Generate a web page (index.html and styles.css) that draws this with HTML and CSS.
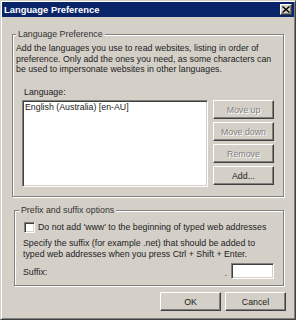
FILE: index.html
```html
<!DOCTYPE html>
<html>
<head>
<meta charset="utf-8">
<title>Language Preference</title>
<link rel="stylesheet" href="styles.css">
</head>
<body>
<div class="window">
  <div class="titlebar">
    <span class="title">Language Preference</span>
    <span class="close"><svg width="8" height="7" viewBox="0 0 8 7"><path d="M0.5 0.5 L7.5 6.5 M7.5 0.5 L0.5 6.5" stroke="#000" stroke-width="1.4" fill="none"/></svg></span>
  </div>
  <div class="content">
    <fieldset class="group group-lang">
      <legend>Language Preference</legend>
      <p class="desc">Add the languages you use to read websites, listing in order of<br>preference. Only add the ones you need, as some characters can<br>be used to impersonate websites in other languages.</p>
      <div class="lang-area">
        <div class="label">Language:</div>
        <div class="lang-row">
          <div class="listbox"><div class="item">English (Australia) [en-AU]</div></div>
          <div class="side-buttons">
            <button class="btn" disabled>Move up</button>
            <button class="btn" disabled>Move down</button>
            <button class="btn" disabled>Remove</button>
            <button class="btn">Add...</button>
          </div>
        </div>
      </div>
    </fieldset>
    <fieldset class="group group-prefix">
      <legend>Prefix and suffix options</legend>
      <div class="check-row">
        <span class="checkbox"></span>
        <span class="check-label">Do not add 'www' to the beginning of typed web addresses</span>
      </div>
      <p class="specify">Specify the suffix (for example .net) that should be added to<br>typed web addresses when you press Ctrl + Shift + Enter.</p>
      <div class="suffix-row">
        <span class="suffix-label">Suffix:</span>
        <span class="suffix-field"><span class="dot">.</span><span class="textbox"></span></span>
      </div>
    </fieldset>
    <div class="dialog-buttons">
      <button class="btn">OK</button>
      <button class="btn">Cancel</button>
    </div>
  </div>
</div>
</body>
</html>
```
FILE: styles.css
```css
* { box-sizing: border-box; }
html, body { margin: 0; padding: 0; background: #d4d0c8; }
body {
  font-family: "Liberation Sans", Arial, sans-serif;
  font-size: 8.8px;
  color: #222;
  width: 296px;
  height: 320px;
  overflow: hidden;
}
.window {
  width: 296px;
  height: 320px;
  background: #d4d0c8;
  border: 1px solid;
  border-color: #d4d0c8 #404040 #404040 #d4d0c8;
  box-shadow: inset 1px 1px #fff, inset -1px -1px #808080;
  padding: 1px;
  display: flex;
  flex-direction: column;
}
.titlebar {
  height: 15px;
  flex: none;
  background: #0a246a;
  color: #fff;
  display: flex;
  align-items: center;
  justify-content: space-between;
  padding: 0 2px 0 2px;
}
.title { font-weight: bold; font-size: 9.4px; line-height: 11px; }
.close {
  width: 12px;
  height: 11px;
  background: #d4d0c8;
  border: 1px solid;
  border-color: #fff #404040 #404040 #fff;
  box-shadow: inset -1px -1px #808080;
  display: flex;
  align-items: center;
  justify-content: center;
}
.close svg { display: block; }
.content {
  flex: 1;
  display: flex;
  flex-direction: column;
  padding: 0 8px 0 10px;
}
.group {
  margin: 0 2px 0 0;
  min-inline-size: 0;
  border: 1px solid #808080;
  box-shadow: inset 1px 1px #fff, 1px 1px #fff;
}
.group legend {
  padding: 0 2px;
  margin: 0;
  line-height: 11px;
  background: #d4d0c8;
  color: #333;
}
.group-lang {
  margin-top: 12px;
  padding: 3px 8px 9px 3px;
}
.desc {
  margin: 0;
  line-height: 10.5px;
  white-space: nowrap;
}
.lang-area { padding-left: 6px; }
.label {
  margin: 12px 0 0 2px;
  line-height: 10.5px;
}
.lang-row {
  margin-top: 3px;
  display: flex;
  align-items: flex-start;
}
.listbox {
  width: 186px;
  height: 87px;
  background: #fff;
  border: 1px solid;
  border-color: #808080 #fff #fff #808080;
  box-shadow: inset 1px 1px #404040, inset -1px -1px #d4d0c8;
  padding: 1px 2px;
}
.item { line-height: 10.5px; white-space: nowrap; }
.side-buttons {
  margin-left: 5px;
  display: flex;
  flex-direction: column;
  gap: 3px;
}
.btn {
  width: 61px;
  height: 19px;
  padding: 0;
  margin: 0;
  font: inherit;
  color: #222;
  background: #d4d0c8;
  border: 1px solid;
  border-color: #fff #404040 #404040 #fff;
  box-shadow: inset -1px -1px #808080;
  border-radius: 0;
  text-align: center;
  line-height: 10px;
}
.btn:disabled {
  color: #808080;
  text-shadow: 1px 1px #fff;
}
.group-prefix {
  margin-top: 8px;
  margin-left: 2px;
  padding: 6px 9px 6px 4px;
}
.check-row {
  display: flex;
  align-items: center;
  height: 11px;
  margin-left: 5px;
}
.checkbox {
  width: 11px;
  height: 11px;
  flex: none;
  background: #fff;
  border: 1px solid;
  border-color: #808080 #fff #fff #808080;
  box-shadow: inset 1px 1px #404040, inset -1px -1px #d4d0c8;
}
.check-label {
  margin-left: 3px;
  white-space: nowrap;
  line-height: 10.5px;
}
.specify {
  margin: 5px 0 0 4px;
  line-height: 10.5px;
  white-space: nowrap;
}
.suffix-row {
  margin: 4px 0 0 4px;
  display: flex;
  align-items: flex-end;
  justify-content: space-between;
  height: 16px;
}
.suffix-label { line-height: 10.5px; padding-bottom: 2px; }
.suffix-field {
  display: flex;
  align-items: flex-end;
  gap: 4px;
}
.dot { line-height: 10px; padding-bottom: 1px; }
.textbox {
  width: 43px;
  height: 16px;
  background: #fff;
  border: 1px solid;
  border-color: #808080 #fff #fff #808080;
  box-shadow: inset 1px 1px #404040, inset -1px -1px #d4d0c8;
}
.dialog-buttons {
  margin-top: 6px;
  display: flex;
  justify-content: flex-end;
  gap: 4px;
}
```
